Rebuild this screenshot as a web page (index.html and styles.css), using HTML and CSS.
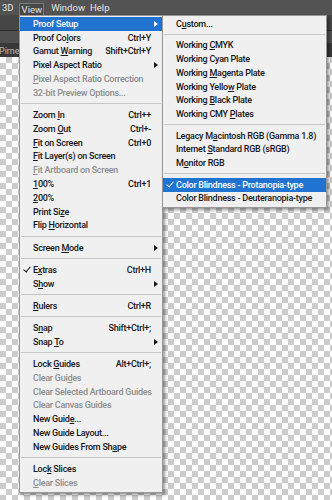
FILE: index.html
```html
<!DOCTYPE html>
<html lang="en">
<head>
	<meta charset="UTF-8">
	<title>View menu</title>
	<link rel="stylesheet" href="styles.css">
</head>
<body>
	<div class="app">
		<div class="menubar">
			<span class="top_item">3D</span>
			<span class="top_item open">View</span>
			<span class="top_item">Window</span>
			<span class="top_item">Help</span>
		</div>
		<div class="options_bar"></div>
		<div class="tool_strip"></div>
		<div class="tab_bar"><span class="tab_name">Pime</span></div>
		<div class="canvas"></div>

		<div class="menu main_menu">
			<div class="item active"><span class="check"></span><span class="label">Proof Setup</span><span class="key"></span><span class="arrow"></span></div>
			<div class="item"><span class="check"></span><span class="label">Proof Co<u>l</u>ors</span><span class="key">Ctrl+Y</span><span></span></div>
			<div class="item"><span class="check"></span><span class="label">Gamut <u>W</u>arning</span><span class="key">Shift+Ctrl+Y</span><span></span></div>
			<div class="item"><span class="check"></span><span class="label">Pixel Aspect Ratio</span><span class="key"></span><span class="arrow"></span></div>
			<div class="item off"><span class="check"></span><span class="label"><u>P</u>ixel Aspect Ratio Correction</span><span class="key"></span><span></span></div>
			<div class="item off"><span class="check"></span><span class="label">32-bit Preview Options...</span><span class="key"></span><span></span></div>
			<div class="sep"></div>
			<div class="item"><span class="check"></span><span class="label">Zoom <u>I</u>n</span><span class="key">Ctrl++</span><span></span></div>
			<div class="item"><span class="check"></span><span class="label">Zoom <u>O</u>ut</span><span class="key">Ctrl+-</span><span></span></div>
			<div class="item"><span class="check"></span><span class="label"><u>F</u>it on Screen</span><span class="key">Ctrl+0</span><span></span></div>
			<div class="item"><span class="check"></span><span class="label"><u>F</u>it Layer(s) on Screen</span><span class="key"></span><span></span></div>
			<div class="item off"><span class="check"></span><span class="label"><u>F</u>it Artboard on Screen</span><span class="key"></span><span></span></div>
			<div class="item"><span class="check"></span><span class="label"><u>1</u>00%</span><span class="key">Ctrl+1</span><span></span></div>
			<div class="item"><span class="check"></span><span class="label"><u>2</u>00%</span><span class="key"></span><span></span></div>
			<div class="item"><span class="check"></span><span class="label">Print Si<u>z</u>e</span><span class="key"></span><span></span></div>
			<div class="item"><span class="check"></span><span class="label">Flip <u>H</u>orizontal</span><span class="key"></span><span></span></div>
			<div class="sep"></div>
			<div class="item"><span class="check"></span><span class="label">Screen <u>M</u>ode</span><span class="key"></span><span class="arrow"></span></div>
			<div class="sep"></div>
			<div class="item checked"><span class="check"></span><span class="label">E<u>x</u>tras</span><span class="key">Ctrl+H</span><span></span></div>
			<div class="item"><span class="check"></span><span class="label">S<u>h</u>ow</span><span class="key"></span><span class="arrow"></span></div>
			<div class="sep"></div>
			<div class="item"><span class="check"></span><span class="label"><u>R</u>ulers</span><span class="key">Ctrl+R</span><span></span></div>
			<div class="sep"></div>
			<div class="item"><span class="check"></span><span class="label">S<u>n</u>ap</span><span class="key">Shift+Ctrl+;</span><span></span></div>
			<div class="item"><span class="check"></span><span class="label">Snap <u>T</u>o</span><span class="key"></span><span class="arrow"></span></div>
			<div class="sep"></div>
			<div class="item"><span class="check"></span><span class="label">Lock <u>G</u>uides</span><span class="key">Alt+Ctrl+;</span><span></span></div>
			<div class="item off"><span class="check"></span><span class="label">Clear Gui<u>d</u>es</span><span class="key"></span><span></span></div>
			<div class="item off"><span class="check"></span><span class="label">Clear Selected Artboard Guides</span><span class="key"></span><span></span></div>
			<div class="item off"><span class="check"></span><span class="label">Clear Canvas Guides</span><span class="key"></span><span></span></div>
			<div class="item"><span class="check"></span><span class="label">New Guid<u>e</u>...</span><span class="key"></span><span></span></div>
			<div class="item"><span class="check"></span><span class="label">New Guide Layout...</span><span class="key"></span><span></span></div>
			<div class="item"><span class="check"></span><span class="label">New Guides From Sh<u>a</u>pe</span><span class="key"></span><span></span></div>
			<div class="sep"></div>
			<div class="item"><span class="check"></span><span class="label">Loc<u>k</u> Slices</span><span class="key"></span><span></span></div>
			<div class="item off"><span class="check"></span><span class="label"><u>C</u>lear Slices</span><span class="key"></span><span></span></div>
		</div>

		<div class="menu sub_menu">
			<div class="item"><span class="check"></span><span class="label">C<u>u</u>stom...</span></div>
			<div class="sep"></div>
			<div class="item"><span class="check"></span><span class="label">Working <u>C</u>MYK</span></div>
			<div class="item"><span class="check"></span><span class="label">Working Cyan Plate</span></div>
			<div class="item"><span class="check"></span><span class="label">Working <u>M</u>agenta Plate</span></div>
			<div class="item"><span class="check"></span><span class="label">Working Yello<u>w</u> Plate</span></div>
			<div class="item"><span class="check"></span><span class="label">Working <u>B</u>lack Plate</span></div>
			<div class="item"><span class="check"></span><span class="label">Working CMY <u>P</u>lates</span></div>
			<div class="sep"></div>
			<div class="item"><span class="check"></span><span class="label">Legacy M<u>a</u>cintosh RGB (Gamma 1.8)</span></div>
			<div class="item"><span class="check"></span><span class="label">Internet <u>S</u>tandard RGB (sRGB)</span></div>
			<div class="item"><span class="check"></span><span class="label">M<u>o</u>nitor RGB</span></div>
			<div class="sep"></div>
			<div class="item active checked"><span class="check"></span><span class="label">Color Blindness - Protanopia-type</span></div>
			<div class="item"><span class="check"></span><span class="label">Color Blindness - Deuteranopia-type</span></div>
		</div>
	</div>
</body>
</html>
```

FILE: styles.css
```css
*{
	box-sizing: border-box;
}
body{
	margin: 0;
	width: 332px;
	height: 500px;
	overflow: hidden;
	font-family: Roboto, "Noto Sans", sans-serif;
}
.app{
	position: relative;
	height: 500px;
	display: flex;
	flex-direction: column;
	background: #3a3a3a;
}
.menubar{
	height: 15px;
	background: #535353;
	display: flex;
	align-items: stretch;
	padding-left: 2px;
	gap: 5px;
	font-size: 9.5px;
	color: #e4e4e4;
}
.top_item{
	display: flex;
	align-items: center;
}
.top_item.open{
	margin-top: 3px;
	padding: 0 1px 0 2px;
	margin-right: 2px;
	background: #484848;
	border: 1px solid #7a7a7a;
	border-bottom: none;
}
.options_bar{
	height: 16px;
	background: #464646;
	border-bottom: 1px solid #2c2c2c;
}
.tool_strip{
	height: 12px;
	background: #505050;
}
.tab_bar{
	height: 14px;
	background: #393939;
	font-size: 9px;
	color: #b9b9b9;
	display: flex;
	align-items: center;
}
.tab_name{
	margin-left: -1px;
	margin-top: 2px;
}
.canvas{
	flex: 1;
	background: repeating-conic-gradient(#cccccc 0 25%, #ffffff 0 50%) 0 0 / 12px 12px;
}

/* dropdown menus */
.menu{
	position: absolute;
	top: 15px;
	background: #f0f0f0;
	border: 1px solid #979797;
	box-shadow: 2px 2px 3px rgba(0, 0, 0, 0.4);
	padding: 1px 0 2px;
	font-size: 9px;
	font-weight: 500;
	letter-spacing: -0.25px;
	color: #161620;
}
.main_menu{
	left: 19px;
	width: 144px;
}
.sub_menu{
	left: 162px;
	width: 165px;
}
.item{
	display: grid;
	grid-template-columns: 13px 1fr auto 11px;
	align-items: center;
	height: 13.8px;
	white-space: nowrap;
}
.sub_menu .item{
	grid-template-columns: 13px 1fr;
}
.item u{
	text-decoration-thickness: 1px;
	text-underline-offset: 1px;
}
.key{
	text-align: right;
}
.item.off{
	color: #8d8d8d;
}
.item.active{
	background: #2173d1;
	color: #fff;
}
.check{
	height: 100%;
	display: flex;
	align-items: center;
	justify-content: center;
}
.checked .check::before{
	content: "";
	width: 3px;
	height: 6px;
	border: solid currentColor;
	border-width: 0 1.5px 1.5px 0;
	transform: rotate(40deg);
	margin-top: -2px;
}
.arrow{
	display: flex;
	justify-content: center;
	padding-right: 1px;
}
.arrow::before{
	content: "";
	border-left: 4px solid currentColor;
	border-top: 3.5px solid transparent;
	border-bottom: 3.5px solid transparent;
}
.sep{
	height: 8.4px;
	display: flex;
	align-items: center;
	padding: 0 1px;
}
.sep::before{
	content: "";
	flex: 1;
	height: 1px;
	background: #c6c6c6;
}
.sub_menu .sep{
	height: 7.6px;
}
```
